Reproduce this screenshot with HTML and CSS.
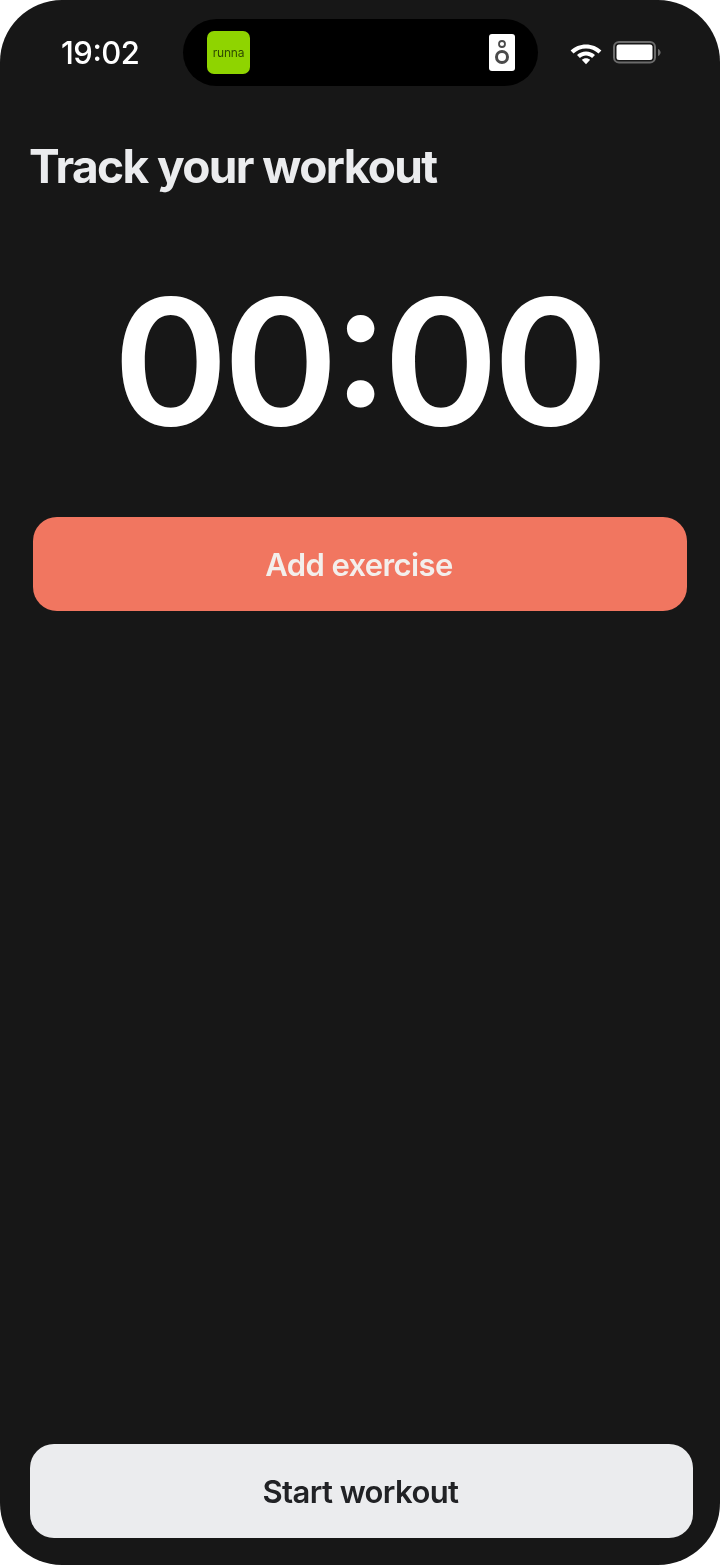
FILE: index.html
```html
<!DOCTYPE html>
<html lang="en">
<head>
<meta charset="utf-8">
<title>Track your workout</title>
<link rel="stylesheet" href="styles.css">
</head>
<body>
<main class="screen">
  <header class="status">
    <span class="time">19:02</span>
    <div class="island">
      <div class="app-logo"><span>runna</span></div>
      <svg class="speaker" viewBox="0 0 26 37" width="26" height="37" aria-hidden="true">
        <rect width="26" height="37" rx="3" fill="#fff"/>
        <circle cx="13" cy="10" r="3" fill="none" stroke="#4a4a4a" stroke-width="1.8"/>
        <circle cx="13" cy="23" r="5.5" fill="none" stroke="#4a4a4a" stroke-width="3"/>
      </svg>
    </div>
    <div class="indicators">
      <svg class="wifi" viewBox="0 0 34 24" width="34" height="24" aria-hidden="true">
        <path d="M17 3.5C11 3.5 5.6 5.8 1.600 9.600l2.900 3C7.800 9.400 12.200 7.500 17 7.500s9.200 1.900 12.500 5.100l2.900-3C28.400 5.800 23 3.500 17 3.500z" fill="#fff"/>
        <path d="M17 10.400c-3.400 0-6.600 1.300-9 3.500l2.900 3c1.600-1.500 3.800-2.400 6.100-2.400s4.500.9 6.100 2.400l2.900-3c-2.400-2.200-5.600-3.500-9-3.500z" fill="#fff"/>
        <path d="M17 17.200c-1.600 0-3.100.6-4.200 1.600l4.200 4.400 4.200-4.400c-1.100-1-2.600-1.600-4.200-1.600z" fill="#fff"/>
      </svg>
      <svg class="battery" viewBox="0 0 50 24" width="50" height="24" aria-hidden="true">
        <rect x="1" y="1" width="41" height="20.500" rx="5" fill="none" stroke="#6b6b6b" stroke-width="2"/>
        <rect x="3.500" y="3.500" width="36" height="15.500" rx="2.500" fill="#fff"/>
        <path d="M45 8v7c1.600-.6 2.600-2 2.600-3.500S46.600 8.600 45 8z" fill="#6b6b6b"/>
      </svg>
    </div>
  </header>

  <h1 class="title">Track your workout</h1>
  <div class="timer">00:00</div>
  <button class="btn btn-add" type="button">Add exercise</button>
  <div class="spacer"></div>
  <button class="btn btn-start" type="button">Start workout</button>
</main>
</body>
</html>
```

FILE: styles.css
```css
* { box-sizing: border-box; }
html, body { margin: 0; padding: 0; background: #fff; }
body { width: 720px; height: 1565px; overflow: hidden; font-family: Inter, "Liberation Sans", sans-serif; }

.screen {
  width: 720px;
  height: 1565px;
  background: #171717;
  border-radius: 62px;
  display: flex;
  flex-direction: column;
  overflow: hidden;
  padding: 19px 0 27px;
  will-change: opacity;
}

.status {
  display: flex;
  align-items: center;
  height: 67px;
  flex: none;
}
.time {
  width: 183px;
  padding-left: 61px;
  font-size: 31px;
  font-weight: 500;
  color: #fff;
  letter-spacing: -0.5px;
  line-height: 67px;
  font-feature-settings: "case";
}
.island {
  width: 355px;
  height: 67px;
  background: #000;
  border-radius: 34px;
  display: flex;
  align-items: center;
  justify-content: space-between;
  padding: 0 23px 0 24px;
}
.app-logo {
  width: 43px;
  height: 43px;
  border-radius: 7px;
  background: #8fd400;
  display: flex;
  align-items: center;
  justify-content: center;
}
.app-logo span {
  font-size: 12px;
  line-height: 1;
  color: #2f4a00;
  letter-spacing: -0.2px;
}
.speaker { display: block; }
.indicators {
  display: flex;
  align-items: center;
  padding-left: 31px;
  gap: 10px;
}
.wifi, .battery { display: block; }

.title {
  margin: 53px 0 0 29px;
  font-size: 46px;
  line-height: 54px;
  font-weight: 700;
  letter-spacing: -1.6px;
  color: #ebecee;
  flex: none;
}
.timer {
  margin-top: 58px;
  height: 220px;
  padding-right: 4px;
  text-align: center;
  font-size: 175px;
  line-height: 220px;
  font-weight: 600;
  color: #fff;
  letter-spacing: -5.5px;
  font-feature-settings: "case";
  flex: none;
}
.btn {
  display: block;
  flex: none;
  height: 94px;
  border: 0;
  border-radius: 24px;
  font-family: inherit;
  font-size: 31px;
  font-weight: 600;
  letter-spacing: -0.6px;
  padding: 0 2px 0 0;
}
.btn-add {
  margin: 46px 33px 0;
  width: 654px;
  background: #f17660;
  color: #f3efec;
}
.spacer { flex: 1; }
.btn-start {
  margin-left: 30px;
  width: 663px;
  background: #ebecee;
  color: #212225;
}
```
